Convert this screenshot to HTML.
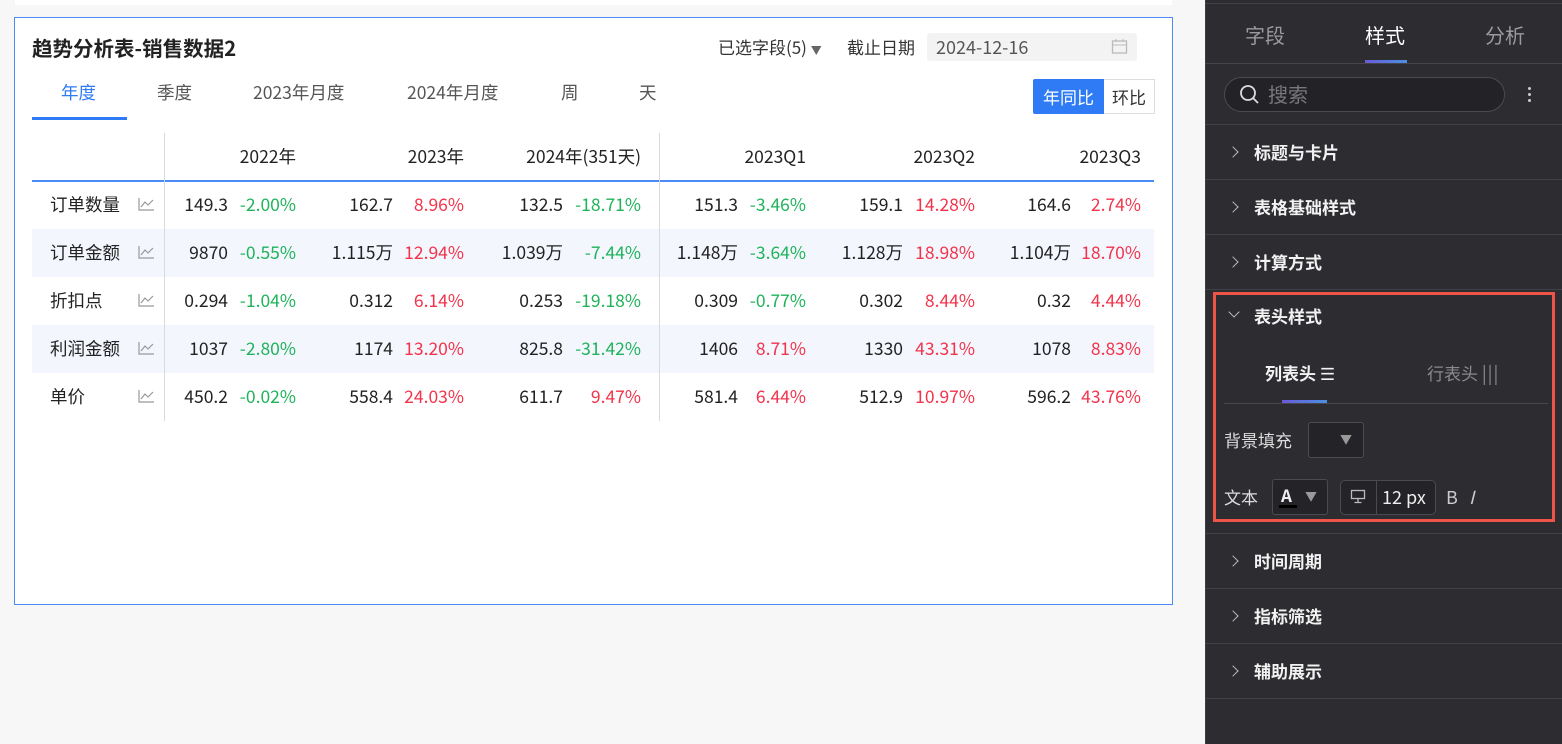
<!DOCTYPE html>
<html><head><meta charset="utf-8">
<style>
*{margin:0;padding:0;box-sizing:border-box}
body{width:1562px;height:744px;overflow:hidden;background:#f7f7f8;font-family:"Noto Sans CJK SC","Liberation Sans",sans-serif;position:relative}
.a{position:absolute;white-space:nowrap;line-height:24px}
.r{text-align:right}
.t{font-size:17.5px;color:#222}
.g{color:#1fb35a}.red{color:#f2334b}
.sec{position:absolute;left:1205px;width:357px;height:55px;border-bottom:1px solid #404046}
.sec span{position:absolute;left:49px;top:15px;line-height:24px;color:#f2f2f2;font-weight:bold;font-size:17px}
.sec i{position:absolute;left:26px;top:50%;width:8px;height:8px;border-right:1.5px solid #bbb;border-top:1.5px solid #bbb;transform:translateY(-50%) rotate(45deg);margin-left:-2px}
.tab{font-size:17.5px;color:#555}
</style></head><body>
<div class="a" style="left:15px;top:0;width:1157px;height:5px;background:#fff"></div>
<div class="a" style="left:14px;top:17px;width:1159px;height:588px;background:#fff;border:1.5px solid #4a8cf7"></div>
<div class="a" style="left:32px;top:35px;font-size:20.5px;font-weight:bold;color:#222">趋势分析表-销售数据2</div>
<div class="a" style="left:718px;top:35px;font-size:17px;color:#333">已选字段(5) <span style="font-size:11px;color:#666">▼</span></div>
<div class="a" style="left:847px;top:35px;font-size:17px;color:#333">截止日期</div>
<div class="a" style="left:927px;top:33px;width:210px;height:28px;background:#f3f3f4;border-radius:3px"></div>
<div class="a" style="left:936px;top:35px;font-size:18px;color:#555">2024-12-16</div>
<svg class="a" style="left:1111px;top:38px" width="17" height="17" viewBox="0 0 17 17"><rect x="1.5" y="3" width="14" height="12" fill="none" stroke="#bbb" stroke-width="1.3"/><line x1="1.5" y1="7" x2="15.5" y2="7" stroke="#bbb"/><line x1="5" y1="1" x2="5" y2="4" stroke="#bbb"/><line x1="12" y1="1" x2="12" y2="4" stroke="#bbb"/></svg>
<div class="a tab" style="left:61px;top:81px;color:#2f7bf5">年度</div>
<div class="a" style="left:32px;top:117px;width:95px;height:3px;background:#2f7bf5"></div>
<div class="a tab" style="left:157px;top:81px">季度</div>
<div class="a tab" style="left:253px;top:81px">2023年月度</div>
<div class="a tab" style="left:407px;top:81px">2024年月度</div>
<div class="a tab" style="left:561px;top:81px">周</div>
<div class="a tab" style="left:639px;top:81px">天</div>
<div class="a" style="left:1033px;top:79px;width:71px;height:35px;background:#2f7bf5;border-radius:2px 0 0 2px;color:#fff;font-size:17px;text-align:center;line-height:35px">年同比</div>
<div class="a" style="left:1104px;top:79px;width:51px;height:35px;border:1px solid #ddd;border-left:none;color:#333;font-size:17px;text-align:center;line-height:33px">环比</div>
<div class="a" style="left:32px;top:229px;width:1122px;height:48px;background:#f3f6fd"></div>
<div class="a" style="left:32px;top:325px;width:1122px;height:48px;background:#f3f6fd"></div>
<div class="a" style="left:32px;top:180px;width:1122px;height:1.5px;background:#4a8cf7"></div>
<div class="a" style="left:164px;top:133px;width:1px;height:288px;background:#d5dae3"></div>
<div class="a" style="left:659px;top:133px;width:1px;height:288px;background:#d5dae3"></div>
<div id="tb"></div>
<script>
var H=[["2022年",296],["2023年",464],["2024年(351天)",641],["2023Q1",806],["2023Q2",975],["2023Q3",1141]];
var VE=[228,393,563,738,903,1071];
var L=["订单数量","订单金额","折扣点","利润金额","单价"];
var D=[[["149.3","-2.00%"],["162.7","8.96%"],["132.5","-18.71%"],["151.3","-3.46%"],["159.1","14.28%"],["164.6","2.74%"]],
[["9870","-0.55%"],["1.115万","12.94%"],["1.039万","-7.44%"],["1.148万","-3.64%"],["1.128万","18.98%"],["1.104万","18.70%"]],
[["0.294","-1.04%"],["0.312","6.14%"],["0.253","-19.18%"],["0.309","-0.77%"],["0.302","8.44%"],["0.32","4.44%"]],
[["1037","-2.80%"],["1174","13.20%"],["825.8","-31.42%"],["1406","8.71%"],["1330","43.31%"],["1078","8.83%"]],
[["450.2","-0.02%"],["558.4","24.03%"],["611.7","9.47%"],["581.4","6.44%"],["512.9","10.97%"],["596.2","43.76%"]]];
var h="";
H.forEach(function(x){h+='<div class="a r t" style="left:'+(x[1]-200)+'px;width:200px;top:145px">'+x[0]+'</div>'});
L.forEach(function(l,i){var y=193+i*48;
h+='<div class="a t" style="left:50px;top:'+y+'px">'+l+'</div>';
h+='<svg class="a" style="left:138px;top:'+(y+4)+'px" width="17" height="14" viewBox="0 0 17 14"><path d="M1 1V13H16" fill="none" stroke="#999" stroke-width="1.2"/><path d="M3 10L7 5L10 8L15 3" fill="none" stroke="#999" stroke-width="1.2"/></svg>';
D[i].forEach(function(c,j){var neg=c[1][0]=="-";
h+='<div class="a r t" style="left:'+(VE[j]-120)+'px;width:120px;top:'+y+'px">'+c[0]+'</div>';
h+='<div class="a r t '+(neg?'g':'red')+'" style="left:'+(H[j][1]-120)+'px;width:120px;top:'+y+'px">'+c[1]+'</div>';});});
document.getElementById("tb").innerHTML=h;
</script>
<!-- right panel -->
<div class="a" style="left:1205px;top:0;width:357px;height:744px;background:#2c2c31;border-left:1px solid #3c3c42"></div>
<div class="a" style="left:1205px;top:3px;width:357px;height:1px;background:#404046"></div>
<div class="a" style="left:1245px;top:22px;font-size:20px;line-height:26px;color:#9a9a9f">字段</div>
<div class="a" style="left:1365px;top:22px;font-size:20px;line-height:26px;color:#fff">样式</div>
<div class="a" style="left:1485px;top:22px;font-size:20px;line-height:26px;color:#9a9a9f">分析</div>
<div class="a" style="left:1205px;top:63px;width:357px;height:1px;background:#45454b"></div>
<div class="a" style="left:1365px;top:60px;width:42px;height:3px;background:linear-gradient(90deg,#6a5ad8,#4a90e2)"></div>
<div class="a" style="left:1224px;top:77px;width:281px;height:35px;border:1px solid #4a4a50;border-radius:18px;background:#232327"></div>
<svg class="a" style="left:1239px;top:84px" width="21" height="21" viewBox="0 0 21 21"><circle cx="9" cy="9" r="7" fill="none" stroke="#ddd" stroke-width="1.8"/><path d="M14 14L19 19" stroke="#ddd" stroke-width="1.8"/></svg>
<div class="a" style="left:1268px;top:81px;font-size:20px;line-height:26px;color:#77777c">搜索</div>
<div class="a" style="left:1528px;top:87px;width:3px;height:3px;background:#ccc;border-radius:2px;box-shadow:0 6px 0 #ccc,0 12px 0 #ccc"></div>
<div class="a" style="left:1205px;top:124px;width:357px;height:1px;background:#404046"></div>
<div class="sec" style="top:125px"><i></i><span>标题与卡片</span></div>
<div class="sec" style="top:180px"><i></i><span>表格基础样式</span></div>
<div class="sec" style="top:235px"><i></i><span>计算方式</span></div>
<div class="a" style="left:1213px;top:292px;width:342px;height:230px;border:3px solid #ef5448"></div>
<div class="a" style="left:1230px;top:308px;width:8px;height:8px;border-right:1.5px solid #bbb;border-bottom:1.5px solid #bbb;transform:rotate(45deg)"></div>
<div class="a" style="left:1254px;top:304px;font-size:17px;font-weight:bold;color:#f2f2f2">表头样式</div>
<div class="a" style="left:1265px;top:361px;font-size:17px;font-weight:bold;color:#f2f2f2">列表头 <span style="font-weight:normal">☰</span></div>
<div class="a" style="left:1427px;top:361px;font-size:17px;color:#8a8a8f">行表头 <span style="font-size:18px;letter-spacing:1px">|||</span></div>
<div class="a" style="left:1282px;top:400px;width:45px;height:3px;background:linear-gradient(90deg,#6a5ad8,#4a90e2)"></div>
<div class="a" style="left:1224px;top:403px;width:324px;height:1px;background:#47474d"></div>
<div class="a" style="left:1224px;top:428px;font-size:17px;color:#ddd">背景填充</div>
<div class="a" style="left:1308px;top:422px;width:56px;height:36px;border:1px solid #4a4a50;border-radius:3px;background:#242428"></div>
<div class="a" style="left:1340px;top:428px;font-size:12px;color:#999">▼</div>
<div class="a" style="left:1224px;top:485px;font-size:17px;color:#ddd">文本</div>
<div class="a" style="left:1272px;top:479px;width:56px;height:36px;border:1px solid #4a4a50;border-radius:3px;background:#242428"></div>
<div class="a" style="left:1281px;top:483px;font-size:17px;font-weight:bold;color:#eee">A</div>
<div class="a" style="left:1279px;top:505px;width:18px;height:3px;background:#000"></div>
<div class="a" style="left:1305px;top:485px;font-size:12px;color:#999">▼</div>
<div class="a" style="left:1340px;top:480px;width:96px;height:35px;border:1px solid #4a4a50;border-radius:5px;background:#242428"></div>
<div class="a" style="left:1376px;top:480px;width:1px;height:35px;background:#4a4a50"></div>
<svg class="a" style="left:1350px;top:489px" width="16" height="15" viewBox="0 0 16 15"><rect x="1.5" y="1.5" width="13" height="8" fill="none" stroke="#bbb" stroke-width="1.3"/><path d="M8 10V13M4.5 13.5H11.5" stroke="#bbb" stroke-width="1.3"/></svg>
<div class="a" style="left:1382px;top:485px;font-size:18px;color:#eee">12 px</div>
<div class="a" style="left:1446px;top:485px;font-size:18px;color:#ccc">B</div>
<div class="a" style="left:1469px;top:485px;font-size:18px;color:#ccc;font-style:italic">I</div>
<div class="a" style="left:1205px;top:533px;width:357px;height:1px;background:#404046"></div>
<div class="sec" style="top:534px"><i></i><span>时间周期</span></div>
<div class="sec" style="top:589px"><i></i><span>指标筛选</span></div>
<div class="sec" style="top:644px"><i></i><span>辅助展示</span></div>
</body></html>
